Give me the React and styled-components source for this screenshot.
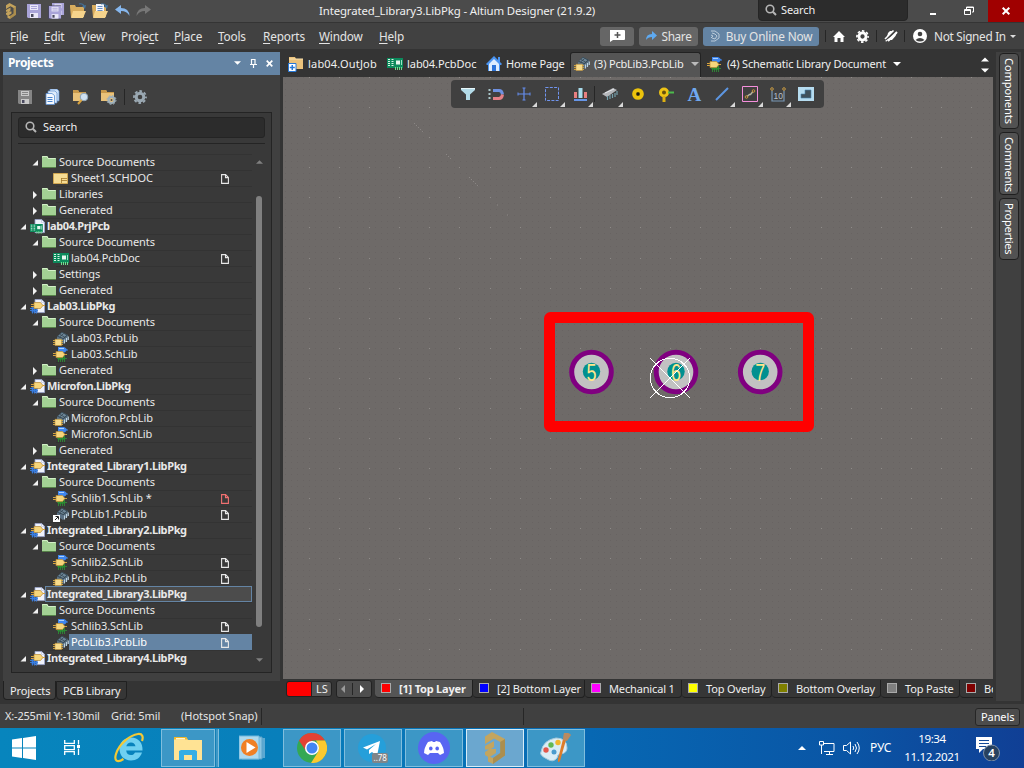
import React from "react";
import styled, { createGlobalStyle } from "styled-components";

const Global = createGlobalStyle`
  * { box-sizing: border-box; }
  body { margin: 0; background: #333; overflow: hidden; }
  svg { display: block; flex: none; }
`;

/* ---------- shared ---------- */
const Screen = styled.div`
  width: 1024px;
  height: 768px;
  display: flex;
  flex-direction: column;
  background: #343434;
  color: #f0f0f0;
  font: 11px/16px "Noto Sans", "Open Sans", sans-serif;
  overflow: hidden;
`;
const Label = styled.span`
  display: block;
  flex: none;
  width: ${(p) => (p.$w ? p.$w + "px" : "auto")};
  letter-spacing: ${(p) => p.$ls ?? -0.1}px;
  font-weight: ${(p) => (p.$bold ? 700 : 400)};
  font-size: ${(p) => p.$size || 11}px;
  white-space: pre;
`;
const Svg = ({ w = 16, h = 16, children, ...rest }) => (
  <svg width={w} height={h} viewBox={`0 0 ${w} ${h}`} {...rest}>{children}</svg>
);

/* ---------- icons ---------- */
const Altium = ({ w = 12, h = 16, c = "#c4a35c" }) => (
  <svg width={w} height={h} viewBox="0 0 12 16">
    <path d="M1 2.200 4.500 0 11 3.500v8.300L5 16l-2.500-1.300V12L5 13l3.600-2.500V5L5.500 3.200 1 6z" fill={c} />
    <path d="M1 7 5.500 4.500v3L4 8.500h2.500v2L3 12.800 1 11.500V10l2-1.200H1z" fill={c} />
    <path d="M8.600 5 11 3.500v8.300L5 16v-3l3.600-2.500z" fill="#7d6430" opacity=".35" />
  </svg>
);
const Floppy = ({ c = "#a9a4d8", d = "#e9e7f7" }) => (
  <g>
    <path d="M0 0h14v14H1l-1-1z" fill={c} />
    <path d="M3 1h8v5H3z" fill={d} />
    <path d="M4 2.500h6M4 4.500h6" stroke={c} />
    <path d="M3 9h8v5H3z" fill={d} />
    <path d="M4 10h2.500v3H4z" fill="#4a4a60" />
  </g>
);
const SaveIcon = ({ grey }) => (
  <Svg w={14} h={14}>{grey ? <Floppy c="#858585" d="#c9c9c9" /> : <Floppy />}</Svg>
);
const SaveAllIcon = () => (
  <Svg w={17} h={16}>
    <g transform="translate(4 0) scale(.86)"><Floppy /></g>
    <path d="M0 2.500h13V16H0z" fill="#47465f" />
    <g transform="translate(1 3) scale(.86 .9)"><Floppy /></g>
  </Svg>
);
const OpenIcon = ({ page }) => (
  <Svg w={17} h={16}>
    <path d="M0 4V2h5l1 2h8v10H1z" fill="#d9ad5e" />
    {page && <path d="M4 1h8v9H4z" fill="#f4f6fb" />}
    {page && <path d="M5.500 3.500h5M5.500 5.500h5M5.500 7.500h5" stroke="#6a8fc4" />}
    <path d="M3 8h13l-3 7H1z" fill="#f6d48c" />
    <path d="M9 1q4-1 5 2" fill="none" stroke="#44739c" strokeWidth="1.200" />
    <path d="m12 3 4-1-1 4z" fill="#44739c" />
  </Svg>
);
const UndoIcon = ({ c = "#86b7ee", flip }) => (
  <Svg w={15} h={12}>
    <g transform={flip ? "translate(15 0) scale(-1 1)" : undefined}>
      <path d="M0 4.500 6 0v3q8 0 8.500 8Q12 6 6 6v3z" fill={c} />
    </g>
  </Svg>
);
const SearchIcon = ({ c = "#b5b5b5" }) => (
  <Svg w={12} h={12}>
    <circle cx="5" cy="5" r="3.800" fill="none" stroke={c} strokeWidth="1.600" />
    <path d="m7.800 7.800 3.200 3.200" stroke={c} strokeWidth="2" />
  </Svg>
);
const DocsIcon = () => (
  <Svg w={15} h={16}>
    <path d="M5 0h7l2 2v10H5z" fill="#cfe2f7" stroke="#5b8fd0" strokeWidth=".7" />
    <path d="M3 2h7l2 2v10H3z" fill="#dfecfa" stroke="#5b8fd0" strokeWidth=".7" />
    <path d="M1 4.500h6l2.500 2v9H1z" fill="#f5f9ff" stroke="#5b8fd0" strokeWidth=".8" />
    <path d="M2.500 8.500h5M2.500 10.500h5M2.500 12.500h5" stroke="#4a86cf" />
  </Svg>
);
const FolderTool = ({ gear }) => (
  <Svg w={17} h={16}>
    <path d="M1 1h5l1 2h7v9H1z" fill="#e9c27a" />
    <path d="M1 1h5l1 2h7v1H1z" fill="#c99a4c" />
    {gear ? (
      <g>
        <circle cx="11.500" cy="11" r="3" fill="#e9c27a" stroke="#9fb0ba" strokeWidth="2.200" />
        <circle cx="11.500" cy="11" r="1" fill="#4a4a4a" />
        <circle cx="11.500" cy="11" r="4.500" fill="none" stroke="#9fb0ba" strokeWidth="1" strokeDasharray="1.800 1.734" />
      </g>
    ) : (
      <g>
        <circle cx="12" cy="8" r="3.800" fill="#cfe0f0" stroke="#8aa0b4" />
        <path d="m9.500 11-3.500 4" stroke="#d9a441" strokeWidth="2" />
      </g>
    )}
  </Svg>
);
const GearIcon = ({ c = "#9aa8b2", s = 14 }) => (
  <svg width={s} height={s} viewBox="0 0 14 14">
    <circle cx="7" cy="7" r="3.800" fill="none" stroke={c} strokeWidth="3" />
    <circle cx="7" cy="7" r="6" fill="none" stroke={c} strokeWidth="1.800" strokeDasharray="2.700 2.012" strokeDashoffset="1.350" />
  </svg>
);
const FolderIcon = () => (
  <Svg w={14} h={12}>
    <path d="M0 0h5.500l1 2H14v9H0z" fill="#a3d194" />
    <path d="M.5 1.500v-1H5l1 2h7.500" fill="none" stroke="#d3efc8" />
    <path d="M0 11.500h14" stroke="#558048" />
  </Svg>
);
const BoardArt = () => (
  <g>
    <path d="M0 0h16v10H0z" fill="#0c8a5c" />
    <path d="M1 1.500h2M1 3.500h2M1 5.500h2M1 7.500h2M4.500 1.500h2M4.500 3.500h2M4.500 5.500h2M4.500 7.500h2" stroke="#d8f4e6" />
    <path d="M9 2.500h4v4H9z" fill="#e6f6ee" />
    <path d="M14.500 2v5" stroke="#9fe0c4" />
    <path d="M8.500 9v3M10.500 9v3M12.500 9v3M14.500 9v3" stroke="#6fe08f" />
  </g>
);
const PcbIcon = () => <Svg w={16} h={12}><BoardArt /></Svg>;
const SheetIcon = () => (
  <Svg w={15} h={11}>
    <path d="M.5.500h14v10H.5z" fill="#f5dc94" stroke="#d0a650" />
    <path d="M8 5.500h6M8 7.500h6M8.500 5v5" stroke="#a37a2c" strokeWidth=".8" />
  </Svg>
);
const PageArt = () => (
  <g><path d="M5 .4h6.500l3 3v10.200H5z" fill="#eef2fb" stroke="#9aa6cf" strokeWidth=".8" /><path d="m11.500.4 3 3h-3z" fill="#fff" stroke="#9aa6cf" strokeWidth=".5" /></g>
);
const PrjIcon = () => <Svg w={16} h={15}><PageArt /><g transform="translate(0 5) scale(.8)"><BoardArt /></g></Svg>;
const GateArt = () => (
  <g><path d="M0 2.500h4M0 4.500h4M10 3.500h4" stroke="#d9a43c" /><path d="M3 .5h6.500L12 3.500l-2.500 3H3z" fill="#f6d67c" stroke="#b98a35" strokeWidth=".7" /></g>
);
const PkgIcon = () => (
  <Svg w={16} h={15}>
    <PageArt />
    <path d="M1.500 8h6v5.500h-6z" fill="#2a62bd" />
    <path d="M0 9.500h8M0 11.500h8M2.500 14.500v-6M4.500 14.500v-6M6.500 14.500v-6" stroke="#3b80e0" strokeWidth=".9" />
    <g transform="translate(1 3)"><GateArt /></g>
  </Svg>
);
const SchLibIcon = () => (
  <Svg w={16} h={15}>
    <path d="M5 0h6q2 .5 3 2.500-1 2.500-3 3H5z" fill="#3f86ee" />
    <path d="M6 1.500h5" stroke="#a9d0ff" />
    <path d="M13 3h2" stroke="#3f86ee" />
    <path d="M5 9h7v4H5z" fill="#1f7a2a" />
    <path d="M5.500 9v6M7.500 9v6M9.500 9v6M11.500 9v6M4 11.500h10" stroke="#2f8a35" strokeWidth=".9" />
    <g transform="translate(0 4)"><GateArt /></g>
  </Svg>
);
const PcbLibIcon = ({ linked }) => (
  <Svg w={16} h={14}>
    <path d="M4 4.500 9 0l6 3v5l-5 4-6-4z" fill="#5a7083" />
    <path d="M4 4.500 9 0l6 3-4.500 4z" fill="#33444f" />
    <path d="M5 4 9 .8l4.500 2.400-3.300 2.800z" fill="#6e8799" />
    <path d="m7 2.500 4.500 2.500M6.500 5l4-3.300" stroke="#33444f" strokeWidth=".8" />
    <path d="M11.500 7.500v4M13.500 6v4M15.300 4.500V8" stroke="#bcd0dc" strokeWidth="1.100" />
    {linked ? (
      <g><path d="M0 7h7v7H0z" fill="#fff" /><path d="m2 12 3-3M2.500 8.500h3v3" stroke="#222" fill="none" /></g>
    ) : (
      <g><path d="M0 8.500h10M0 10.500h10M0 12.500h10" stroke="#cda13d" /><path d="M2 7.300h6.500v6.200H2z" fill="#f8dc8c" stroke="#c2953c" strokeWidth=".6" /></g>
    )}
  </Svg>
);
const OutJobIcon = () => (
  <Svg w={16} h={15}>
    <path d="M1 0h6l1 2h7v10H1z" fill="#eac27c" /><path d="M1 2h14" stroke="#fae2ae" />
    <path d="M.5 6.500h7.500v8H.5z" fill="#fff" stroke="#2678d8" />
    <path d="M4.250 8v5M1.800 10.500h5" stroke="#2678d8" strokeWidth="1.500" />
  </Svg>
);
const HomeIcon = () => (
  <Svg w={16} h={16}>
    <path d="M12 1h2v5h-2z" fill="#4a94f2" />
    <path d="m8 0 8 8-1 1h-1v6H2V9H1L0 8z" fill="#4a94f2" />
    <path d="m8 3 5 5v7H3V8z" fill="#dcecff" /><path d="M6 9h4v6H6z" fill="#2b72d8" />
  </Svg>
);
const FileMark = ({ c = "#eee" }) => (
  <Svg w={8} h={10}><path d="M.6.600h4L7.400 3.500v5.900H.6zM4.500.600v3h3" fill="none" stroke={c} strokeWidth="1.100" /></Svg>
);
const DownTri = ({ c = "#fff", w = 8, h = 4 }) => (
  <svg width={w} height={h} viewBox="0 0 8 4"><path d="M0 0h8L4 4z" fill={c} /></svg>
);

/* ---------- title bar ---------- */
const TitleBar = styled.header`
  height: 23px;
  flex: none;
  display: flex;
  align-items: center;
  background: #4b4b4b;
  border-bottom: 1px solid #343434;
`;
const QuickTools = styled.div`
  width: 319px;
  padding-left: 5px;
  display: flex;
  align-items: center;
`;
const Slot = styled.span`
  width: ${(p) => p.$w}px;
  flex: none;
  display: flex;
  align-items: center;
  justify-content: ${(p) => p.$j || "flex-start"};
`;
const TitleSearch = styled.div`
  width: 150px;
  height: 22px;
  margin-top: -2px;
  padding: 0 0 0 6px;
  display: flex;
  align-items: center;
  gap: 4px;
  background: #2c2c2c;
  border: 1px solid #252525;
  border-radius: 0 0 4px 4px;
`;
const WinButton = styled.span`
  width: ${(p) => p.$w}px;
  height: 22px;
  padding-right: ${(p) => p.$pr || 0}px;
  display: flex;
  align-items: center;
  justify-content: center;
  background: ${(p) => (p.$red ? "#a00000" : "transparent")};
`;

/* ---------- menu ---------- */
const MenuBar = styled.nav`
  height: 26px;
  flex: none;
  display: flex;
  align-items: center;
  padding-left: 10px;
  background: #414141;
  color: #e4e4e4;
`;
const MenuItem = styled.span`
  width: ${(p) => p.$w}px;
  flex: none;
  margin-top: -1px;
  font-size: 11.8px;
  letter-spacing: -0.18px;
  u { text-underline-offset: 2px; }
`;
const MenuButton = styled.span`
  width: ${(p) => p.$w}px;
  height: 19px;
  margin-right: ${(p) => p.$mr}px;
  padding-bottom: 1px;
  display: flex;
  flex: none;
  align-items: center;
  justify-content: center;
  gap: 5px;
  border-radius: 3px;
  background: ${(p) => (p.$blue ? "#6484a4" : "#666")};
`;
const Divider = styled.i`
  width: 1px;
  height: ${(p) => p.$h || 12}px;
  flex: none;
  background: #262626;
`;

/* ---------- main areas ---------- */
const Main = styled.main`height: 655px; flex: none; display: flex;`;
const LeftDock = styled.aside`
  width: 283px;
  flex: none;
  padding: 3px 3px 0 3px;
  display: flex;
  flex-direction: column;
`;
const PanelHeader = styled.div`
  height: 23px;
  flex: none;
  padding: 0 7px 1px 5px;
  display: flex;
  align-items: center;
  background: #6484a4;
  color: #fff;
`;
const HeaderTools = styled.div`margin-left: auto; display: flex; align-items: center; gap: 9px;`;
const Panel = styled.section`
  height: 606px;
  flex: none;
  padding: 13px 8px 8px;
  background: #404040;
`;
const PanelTools = styled.div`height: 18px; display: flex; align-items: center; padding-left: 7px;`;
const TreeFrame = styled.div`
  height: 561px;
  margin-top: 6px;
  padding: 4px 6px 0;
  background: #393939;
  border: 1px solid #242424;
`;
const TreeSearch = styled.div`
  height: 21px;
  padding: 0 0 1px 6px;
  display: flex;
  align-items: center;
  gap: 6px;
  background: #2c2c2c;
  border: 1px solid #242424;
  border-radius: 3px;
`;
const TreeRule = styled.div`height: 1px; margin-top: 5px; background: #242424;`;
const TreeArea = styled.div`display: flex; margin-top: 10px;`;
const Tree = styled.div`width: 234px; flex: none;`;
const Row = styled.div`
  height: 16px;
  display: flex;
  align-items: center;
  padding-left: ${(p) => [2, 14, 25][p.$level]}px;
`;
const RowIcon = styled.span`
  width: ${(p) => [16, 14, 16][p.$level]}px;
  height: 16px;
  flex: none;
  display: flex;
  align-items: center;
  margin-left: ${(p) => (p.$level === 2 ? 10 : 0)}px;
  padding-top: ${(p) => (p.$level === 1 ? 0 : 1)}px;
`;
const Twisty = styled.span`
  width: ${(p) => (p.$level === 2 ? 0 : 10)}px;
  flex: none;
  padding-top: 2px;
`;
const RowBody = styled.span`
  flex: 1;
  height: 16px;
  display: flex;
  align-items: center;
  justify-content: space-between;
  padding: 0 23px 0 ${(p) => (p.$focused ? 1 : p.$level === 1 ? 3 : 2)}px;
  margin-left: ${(p) => (p.$level === 0 ? -1 : 0)}px;
  background: ${(p) => (p.$selected ? "#6484a4" : p.$focused ? "#4c4c4c" : "none")};
  border: ${(p) => (p.$focused ? "1px solid #6484a4" : "0")};
  border-top: 1px solid ${(p) => (p.$selected || p.$focused ? "#6484a4" : "#333")};
  color: ${(p) => (p.$selected ? "#fff" : "#e8e8e8")};
`;
const RowText = styled(Label)`margin-top: ${(p) => (p.$focused ? -1 : -2)}px;`;
const Scroll = styled.div`
  width: 6px;
  margin: 6px 0 0 4px;
  display: flex;
  flex-direction: column;
  align-items: center;
`;
const Thumb = styled.div`width: 6px; height: 431px; margin: 32px 0 31px; background: #808080; border-radius: 3px;`;
const PanelTabs = styled.div`display: flex; height: 21px;`;
const PanelTab = styled.span`
  width: ${(p) => p.$w}px;
  height: 19px;
  padding: ${(p) => (p.$active ? 2 : 1)}px 0 0 6px;
  border: 1px solid #202020;
  border-top: ${(p) => (p.$active ? "0" : "1px solid #202020")};
  border-radius: 0 0 4px 4px;
  background: ${(p) => (p.$active ? "#404040" : "#363636")};
`;

/* ---------- center ---------- */
const Center = styled.section`width: 710px; flex: none; display: flex; flex-direction: column; overflow: hidden;`;
const DocTabs = styled.div`height: 28px; flex: none; display: flex; align-items: center; padding: 3px 0 0 5px;`;
const DocTab = styled.span`
  width: ${(p) => p.$w}px;
  height: 25px;
  flex: none;
  display: flex;
  align-items: center;
  gap: 4px;
  padding: 0 0 1px ${(p) => (p.$active ? 3 : 0)}px;
  ${(p) => p.$active && "background:#555; border:1px solid #222; border-bottom:0; border-radius:3px 3px 0 0; margin-right:6px; padding-bottom:2px;"}
`;
const Canvas = styled.div`height: 602px; flex: none; position: relative; background: #6e6a68;`;
const ToolStrip = styled.div`
  position: absolute;
  left: 168px;
  top: 3px;
  width: 373px;
  height: 28px;
  padding-left: 3px;
  display: flex;
  align-items: center;
  background: #404040;
  border-radius: 4px;
`;
const Tool = styled.span`
  width: ${(p) => p.$w || 28}px;
  height: 28px;
  flex: none;
  display: flex;
  align-items: center;
  justify-content: center;
  position: relative;
  ${(p) => p.$menu && "&::after{content:'';position:absolute;right:1px;bottom:1px;border-style:solid;border-width:0 0 5px 5px;border-color:transparent transparent #d8d8d8 transparent;}"}
`;
const LayerBar = styled.div`height: 25px; flex: none; display: flex; padding: 1px 0 0 3px; overflow: hidden;`;
const LayerSet = styled.span`
  width: 46px;
  height: 16px;
  flex: none;
  margin: 1px 4px 0 0;
  display: flex;
  border: 1px solid #222;
  border-radius: 3px;
  background: linear-gradient(90deg, #f00 24px, #222 24px, #222 25px, #555 25px);
  padding-left: 29px;
  line-height: 14px;
`;
const LayerArrows = styled.span`
  width: 36px;
  height: 18px;
  flex: none;
  margin-right: 3px;
  padding-right: 3px;
  display: flex;
  align-items: center;
  justify-content: space-around;
  background: #4e4e4e;
  border: 1px solid #222;
  border-radius: 3px;
`;
const LayerTab = styled.span`
  width: ${(p) => p.$w}px;
  height: 18px;
  flex: none;
  display: flex;
  align-items: center;
  gap: 8px;
  padding-left: 6px;
  background: ${(p) => (p.$active ? "#555" : "#363636")};
  border: solid #202020;
  border-width: 0 1px 1px 0;
  border-radius: 0 0 4px 4px;
`;
const Swatch = styled.i`width: 10px; height: 10px; flex: none; margin-top: -2px; background: ${(p) => p.$c}; border: 1px solid #aaa;`;

/* ---------- right dock ---------- */
const RightDock = styled.aside`width: 31px; padding: 3px;`;
const RightRail = styled.div`
  height: 649px;
  padding: 1px 2px 0 3px;
  display: flex;
  flex-direction: column;
  gap: 3px;
  background: #404040;
`;
const SideTab = styled.span`
  height: ${(p) => p.$h}px;
  width: 20px;
  flex: none;
  padding: 4px 1px 0;
  writing-mode: vertical-rl;
  letter-spacing: ${(p) => p.$ls ?? -0.2}px;
  background: #525252;
  border: 1px solid #1f1f1f;
  border-radius: 4px;
  color: #fff;
`;

/* ---------- bottom ---------- */
const StatusBar = styled.footer`
  height: 24px;
  flex: none;
  display: flex;
  align-items: center;
  padding: 0 4px 0 5px;
  background: #404040;
  color: #e6e6e6;
`;
const PanelsButton = styled.span`
  width: 45px;
  height: 18px;
  margin: 1px 0 0 auto;
  padding-left: 5px;
  background: #4c4c4c;
  border: 1px solid #262626;
  border-radius: 3px;
  line-height: 16px;
  letter-spacing: -0.1px;
  color: #fff;
`;
const TaskBar = styled.footer`
  height: 40px;
  flex: none;
  display: flex;
  align-items: center;
  background: linear-gradient(90deg, #0785bd 0, #087fbb 280px, #0768b3 590px, #0a55a5 850px, #103f95 1024px);
  color: #fff;
`;
const TaskButton = styled.span`
  width: ${(p) => p.$w || 58}px;
  height: 38px;
  margin-right: ${(p) => (p.$mr ?? 3)}px;
  flex: none;
  display: flex;
  align-items: center;
  justify-content: center;
  background: ${(p) => (p.$active ? "#6ba7cf" : p.$open ? "#3c97c6" : "none")};
  border: 1px solid ${(p) => (p.$active ? "#d8edf8" : p.$open ? "#80bedd" : "transparent")};
  ${(p) => p.$stack && "box-shadow: 1px 0 0 #147fb5, 3px 0 0 #3c97c6, 4px 0 0 #80bedd;"}
`;
const Tray = styled.div`margin-left: auto; width: 226px; display: flex; align-items: center;`;
const Clock = styled.div`
  width: 60px;
  margin: -1px 13px 0 -2px;
  text-align: center;
  line-height: 17.5px;
  font-size: 11.6px;
  letter-spacing: -0.4px;
  white-space: nowrap;
`;

/* ---------- data ---------- */
const src = () => [1, "Source Documents", "folder", true];
const rows = [
  src(),
  [2, "Sheet1.SCHDOC", "sheet", null, "w"],
  [1, "Libraries", "folder", false],
  [1, "Generated", "folder", false],
  [0, "lab04.PrjPcb", "prj", true],
  src(),
  [2, "lab04.PcbDoc", "pcb", null, "w"],
  [1, "Settings", "folder", false],
  [1, "Generated", "folder", false],
  [0, "Lab03.LibPkg", "pkg", true],
  src(),
  [2, "Lab03.PcbLib", "pcblib"],
  [2, "Lab03.SchLib", "schlib"],
  [1, "Generated", "folder", false],
  [0, "Microfon.LibPkg", "pkg", true],
  src(),
  [2, "Microfon.PcbLib", "pcblib"],
  [2, "Microfon.SchLib", "schlib"],
  [1, "Generated", "folder", false],
  [0, "Integrated_Library1.LibPkg", "pkg", true],
  src(),
  [2, "Schlib1.SchLib *", "schlib", null, "r"],
  [2, "PcbLib1.PcbLib", "linked", null, "w"],
  [0, "Integrated_Library2.LibPkg", "pkg", true],
  src(),
  [2, "Schlib2.SchLib", "schlib", null, "w"],
  [2, "PcbLib2.PcbLib", "pcblib", null, "w"],
  [0, "Integrated_Library3.LibPkg", "pkg", true, null, "focus"],
  src(),
  [2, "Schlib3.SchLib", "schlib", null, "w"],
  [2, "PcbLib3.PcbLib", "pcblib", null, "w", "select"],
  [0, "Integrated_Library4.LibPkg", "pkg", true],
];
const rowIcons = {
  folder: <FolderIcon />, sheet: <SheetIcon />, prj: <PrjIcon />, pcb: <PcbIcon />,
  pkg: <PkgIcon />, pcblib: <PcbLibIcon />, schlib: <SchLibIcon />, linked: <PcbLibIcon linked />,
};
const menu = [["", "F", "ile", 34], ["", "E", "dit", 36], ["", "V", "iew", 41], ["Proje", "c", "t", 53],
  ["", "P", "lace", 44], ["", "T", "ools", 45], ["", "R", "eports", 56], ["", "W", "indow", 60], ["", "H", "elp", 221]];
const layers = [["[1] Top Layer", "#f00", 98, true], ["[2] Bottom Layer", "#00f", 112], ["Mechanical 1", "#f0f", 97],
  ["Top Overlay", "#ff0", 90], ["Bottom Overlay", "#808000", 109], ["Top Paste", "#808080", 79], ["Bottom Paste", "#800000", 80]];

/* dots of the placement grid, as one path per density */
const dots = (step, x0, y0) => {
  let d = "";
  for (let i = 0; x0 + i * step < 710; i++)
    for (let j = 0; y0 + j * step < 602; j++)
      d += `M${Math.round(x0 + i * step)} ${Math.round(y0 + j * step)}h1v1h-1z`;
  return d;
};
const majorDots = dots(30.09, 26, 0);
const minorDots = dots(6.018, 2, 0);

const Board = () => (
  <svg width="710" height="602" viewBox="0 0 710 602">
    <path d={minorDots} fill="#666260" opacity=".8" shapeRendering="crispEdges" />
    <path d={majorDots} fill="#8e8b88" shapeRendering="crispEdges" />
    <path d="m131 46 10 10M163 77l6 6M186 100l10 10M214 128h1M224 138h1" stroke="#8b8785" strokeDasharray="1.400 1.400" />
    <rect x="266.500" y="240.500" width="259" height="109" rx="1" fill="none" stroke="#f00" strokeWidth="11" strokeLinejoin="round" />
    {[["5", 308.500], ["6", 393], ["7", 477.200]].map(([n, x]) => (
      <g key={n}>
        <circle cx={x} cy="295" r="19.800" fill="#c2c2c2" stroke="#800080" strokeWidth="5" />
        <circle cx={x} cy="294.500" r="8.700" fill="#009090" />
        <text x={x - 5} y="304" fontFamily="Liberation Sans" fontSize="24" fill="#ffe68c" textLength="10" lengthAdjust="spacingAndGlyphs">{n}</text>
      </g>
    ))}
    <g fill="none" stroke="#fff" shapeRendering="crispEdges">
      <circle cx="387" cy="301" r="19.700" />
      <path d="m367 281 40 40M407 281l-40 40" />
    </g>
  </svg>
);

const tools = [
  [<Svg w={14} h={12} key="f"><path d="M0 0h14v2L9 6.500V12H5V6.500L0 2z" fill="#b3dbe8" /><path d="M0 .5h14" stroke="#e6f7fb" /></Svg>],
  [<Svg w={16} h={13} key="m"><path d="M1.500 1v11" stroke="#a9c6c9" strokeWidth="2" strokeDasharray="2 2" /><path d="M5 2.500h6q3 0 3.500 4" fill="none" stroke="#6f91e2" strokeWidth="3" /><path d="M5 10.500h6q3 0 3.500-4" fill="none" stroke="#e58087" strokeWidth="3" /></Svg>],
  [<Svg w={14} h={14} key="c"><path d="M7 1v12M1 7h12" stroke="#658dee" strokeWidth="1.200" /><path d="M5.500 1h3M5.500 13h3M1 5.500v3M13 5.500v3" stroke="#658dee" /></Svg>, 1],
  [<Svg w={14} h={14} key="s"><path d="M.5.500h13v13H.5z" fill="none" stroke="#7094ee" strokeDasharray="3 1.300" /></Svg>, 1],
  [<Svg w={13} h={13} key="a"><path d="M0 4h3v6H0zM10 4h3v6h-3z" fill="#e77f80" /><path d="M4.500 0h4v10h-4z" fill="#a8dced" /><path d="M0 11h13v2H0z" fill="#6796e8" /></Svg>, 1, 28],
  [<Svg w={16} h={12} key="k"><path d="m0 6 11-6 4 2L5 9z" fill="#b5b7bb" /><path d="m3 5 9-4" stroke="#e5e7ec" /><path d="M5.500 8v4M8 7v4M10.500 6v4M13 5v4M15 3v4" stroke="#76a0ac" strokeWidth="1.200" /></Svg>, 1, 29],
  [<Svg w={13} h={12} key="p"><circle cx="6" cy="6" r="3.900" fill="#3b3510" stroke="#ecc30c" strokeWidth="3.900" /><circle cx="6" cy="6" r="1" fill="#111" /></Svg>],
  [<Svg w={16} h={15} key="v"><circle cx="6" cy="5.500" r="3.500" fill="#665010" stroke="#edc315" strokeWidth="3" /><path d="M6 9v6" stroke="#ddb012" strokeWidth="3" /><path d="M10 5.500h6" stroke="#4cba4c" strokeWidth="2" /></Svg>, 0, 27],
  [<svg key="t" width="18" height="24"><text x="2.500" y="19" fontFamily="Liberation Serif" fontWeight="700" fontSize="19" fill="#6fa8ee">A</text></svg>, 0, 29],
  [<Svg w={14} h={14} key="l"><path d="M1 13 13 1" stroke="#5d96e2" strokeWidth="2" /></Svg>, 1, 28],
  [<Svg w={16} h={16} key="r"><path d="M.5.500h15v15H.5z" fill="none" stroke="#f58fdc" /><path d="m5 10.500 2.500-2h1l2.500-3" fill="none" stroke="#b8b6a0" strokeWidth="1.400" /><circle cx="4.500" cy="11" r="1.300" fill="none" stroke="#c7943b" /><circle cx="11.500" cy="5" r="1.300" fill="none" stroke="#c7943b" /></Svg>, 1],
  [<Svg w={16} h={15} key="d"><path d="M2 3.500V14h12V3.500" fill="none" stroke="#7898b6" strokeWidth="1.200" /><circle cx="2" cy="2" r="1.300" fill="none" stroke="#c79a43" /><circle cx="14" cy="2" r="1.300" fill="none" stroke="#c79a43" /><text x="3.500" y="11.500" fontFamily="Liberation Sans" fontSize="8.500" fill="#b7c1cc">10</text></Svg>, 1],
  [<Svg w={16} h={14} key="o"><path d="M0 0h16v14H0z" fill="#b6dcf0" /><path d="M3 7h4V3h6v8H3z" fill="#40515c" stroke="#4a88ae" strokeWidth=".6" /></Svg>],
];

export default function App() {
  return (
    <Screen>
      <Global />
      <TitleBar>
        <QuickTools>
          <Slot $w={22}><Altium /></Slot>
          <Slot $w={21}><SaveIcon /></Slot>
          <Slot $w={22}><SaveAllIcon /></Slot>
          <Slot $w={22}><OpenIcon /></Slot>
          <Slot $w={23}><OpenIcon page /></Slot>
          <Slot $w={21}><UndoIcon /></Slot>
          <Slot $w={20}><UndoIcon c="#777" flip /></Slot>
        </QuickTools>
        <Label $w={439} $size={11.4} $ls={-0.12}>Integrated_Library3.LibPkg - Altium Designer (21.9.2)</Label>
        <TitleSearch><SearchIcon /><Label>Search</Label></TitleSearch>
        <WinButton $w={49}><Svg w={6} h={10}><path d="M0 7h6v2H0z" fill="#fff" /></Svg></WinButton>
        <WinButton $w={31} $pr={7}><Svg w={10} h={10}><path d="M2.500 3V1h7v5H8M.5 3.500h6v5h-6zM2 1.500h8M0 4.500h7" fill="none" stroke="#fff" /></Svg></WinButton>
        <WinButton $w={36} $red><Svg w={8} h={8}><path d="m.7.700 6.600 6.600M7.300.700.700 7.300" stroke="#fff" strokeWidth="2" /></Svg></WinButton>
      </TitleBar>

      <MenuBar>
        {menu.map(([a, b, c, w]) => <MenuItem key={a + b + c} $w={w}>{a}<u>{b}</u>{c}</MenuItem>)}
        <MenuButton $w={34} $mr={5}>
          <Svg w={16} h={13}><path d="M1 1h14q1 0 1 1v8q0 1-1 1H4l-3 2V2z" fill="#fff" /><path d="M8.500 3v6M5.500 6h6" stroke="#555" strokeWidth="1.500" /></Svg>
        </MenuButton>
        <MenuButton $w={59} $mr={5}>
          <Svg w={11} h={9}><path d="M0 9q0-6 6-6V0l5 4.500L6 9V6Q2 6 0 9z" fill="#5eaaf2" /></Svg>
          <Label $size={11.8} $ls={-0.35}>Share</Label>
        </MenuButton>
        <MenuButton $w={116} $mr={6} $blue>
          <Svg w={11} h={12}><path d="M1 1h4l4 3v4l-4 3H1M2 3l3 1 2 2-2 3-3-1M1 5l2 1-2 2" fill="none" stroke="#b9c9d8" /></Svg>
          <Label $size={11.8} $ls={-0.15}>Buy Online Now</Label>
        </MenuButton>
        <Divider />
        <Slot $w={26} $j="center"><Svg w={12} h={11}><path d="m6 0 6 6h-1.500v5h-3V7h-3v4h-3V6H0z" fill="#fff" /></Svg></Slot>
        <Slot $w={20} $j="center"><GearIcon c="#fff" s={13} /></Slot>
        <Slot $w={5} $j="flex-end"><Divider /></Slot>
        <Slot $w={27} $j="center"><Svg w={14} h={12}><path d="M6 1h2.500L3 7l1-4zM13 2.500 11.500 6 8 10H4l-1.500 1.500L1 11z" fill="#fff" /><path d="m1 9 8.500-8.500" stroke="#fff" strokeWidth="1.600" /><path d="m4 11 9-9" stroke="#fff" strokeWidth="2" /></Svg></Slot>
        <Divider />
        <Slot $w={29} $j="center"><Svg w={14} h={14}><circle cx="7" cy="7" r="7" fill="#fff" /><circle cx="7" cy="5" r="2.300" fill="#414141" /><path d="M2.500 11q4.500-4 9 0-4.500 3-9 0z" fill="#414141" /></Svg></Slot>
        <Label $size={11.8} $ls={-0.3} $w={76}>Not Signed In</Label>
        <DownTri c="#ddd" w={6} h={3} />
      </MenuBar>

      <Main>
        <LeftDock>
          <PanelHeader>
            <Label $bold $size={12} $ls={-0.35}>Projects</Label>
            <HeaderTools>
              <DownTri w={7} h={4} />
              <Svg w={7} h={9}><path d="M1.500 0v5M5 0v5M1.500.500H5M0 5.500h7M3.500 5v4" stroke="#fff" fill="none" strokeWidth="1.200" /></Svg>
              <Svg w={7} h={7}><path d="m.7.700 5.600 5.600M6.300.700.700 6.300" stroke="#fff" strokeWidth="1.700" /></Svg>
            </HeaderTools>
          </PanelHeader>
          <Panel>
            <PanelTools>
              <Slot $w={27}><SaveIcon grey /></Slot>
              <Slot $w={27}><DocsIcon /></Slot>
              <Slot $w={28}><FolderTool /></Slot>
              <Slot $w={24}><FolderTool gear /></Slot>
              <Slot $w={9}><Divider $h={16} /></Slot>
              <GearIcon />
            </PanelTools>
            <TreeFrame>
              <TreeSearch><SearchIcon /><Label>Search</Label></TreeSearch>
              <TreeRule />
              <TreeArea>
                <Tree>
                  {rows.map(([level, text, icon, open, mark, state], i) => (
                    <Row key={i} $level={level}>
                      <Twisty $level={level}>
                        {open === true && <Svg w={6} h={6}><path d="M6 0v5.500H.5z" fill="#f2f2f2" /></Svg>}
                        {open === false && <Svg w={6} h={8}><path d="m1 0 4 4-4 4z" fill="#f2f2f2" /></Svg>}
                      </Twisty>
                      <RowIcon $level={level}>{rowIcons[icon]}</RowIcon>
                      <RowBody $level={level} $selected={state === "select"} $focused={state === "focus"}>
                        <RowText $bold={level === 0} $focused={state === "focus"} $ls={level === 0 ? -0.36 : -0.1}>{text}</RowText>
                        {mark && <FileMark c={mark === "r" ? "#f07070" : "#e8e8e8"} />}
                      </RowBody>
                    </Row>
                  ))}
                </Tree>
                <Scroll>
                  <svg width="7" height="4" viewBox="0 0 8 4"><path d="M0 4h8L4 0z" fill="#808080" /></svg>
                  <Thumb />
                  <DownTri c="#808080" w={7} h={4} />
                </Scroll>
              </TreeArea>
            </TreeFrame>
          </Panel>
          <PanelTabs>
            <PanelTab $w={53} $active><Label>Projects</Label></PanelTab>
            <PanelTab $w={71}><Label $ls={-0.2}>PCB Library</Label></PanelTab>
          </PanelTabs>
        </LeftDock>

        <Center>
          <DocTabs>
            <DocTab $w={99}><OutJobIcon /><Label $ls={0.2}>lab04.OutJob</Label></DocTab>
            <DocTab $w={99}><PcbIcon /><Label $ls={-0.05}>lab04.PcbDoc</Label></DocTab>
            <DocTab $w={84}><HomeIcon /><Label $ls={-0.15}>Home Page</Label></DocTab>
            <DocTab $w={131} $active><PcbLibIcon /><Label $w={93} $ls={-0.2}>(3) PcbLib3.PcbLib</Label><DownTri c="#bbb" w={8} /></DocTab>
            <DocTab $w={274}><SchLibIcon /><Label $w={162} $ls={-0.18}>(4) Schematic Library Document</Label><DownTri /></DocTab>
            <Svg w={8} h={16}><path d="M0 4.500h8L4 .5zM0 11.500h8l-4 4z" fill="#fff" /></Svg>
          </DocTabs>
          <Canvas>
            <Board />
            <ToolStrip>
              {tools.map(([icon, more, w], i) => (
                <React.Fragment key={i}>
                  {i === 5 && <Divider $h={16} />}
                  <Tool $menu={more} $w={w}>{icon}</Tool>
                </React.Fragment>
              ))}
            </ToolStrip>
          </Canvas>
          <LayerBar>
            <LayerSet>LS</LayerSet>
            <LayerArrows>
              <Svg w={4} h={8}><path d="M4 0v8L0 4z" fill="#999" /></Svg><Divider /><Svg w={4} h={8}><path d="M0 0v8l4-4z" fill="#fff" /></Svg>
            </LayerArrows>
            {layers.map(([name, c, w, active]) => (
              <LayerTab key={name} $w={w} $active={active}><Swatch $c={c} /><Label $bold={active} $ls={active ? -0.2 : -0.15}>{name}</Label></LayerTab>
            ))}
          </LayerBar>
        </Center>

        <RightDock>
          <RightRail>
            <SideTab $h={76} $ls={-0.05}>Components</SideTab>
            <SideTab $h={63}>Comments</SideTab>
            <SideTab $h={62}>Properties</SideTab>
          </RightRail>
        </RightDock>
      </Main>

      <StatusBar>
        <Label $w={106} $ls={-0.18}>X:-255mil Y:-130mil</Label>
        <Label $w={70}>Grid: 5mil</Label>
        <Label $w={80} $ls={0}>(Hotspot Snap)</Label>
        <Divider $h={17} />
        <Slot $w={262} $j="flex-end"><Divider $h={17} /></Slot>
        <PanelsButton>Panels</PanelsButton>
      </StatusBar>

      <TaskBar>
        <TaskButton $w={48} $mr={0}>
          <Svg w={24} h={24}><path d="m0 3.500 10-1.400v9.400H0zM11 2l13-2v11.500H11zM0 12.500h10v9.400L0 20.500zM11 12.500h13V24l-13-2z" fill="#fff" /></Svg>
        </TaskButton>
        <TaskButton $w={48} $mr={4}>
          <Svg w={16} h={16}><path d="M.7 0v3.300h9.600V0M.7 15v-3.300h9.600V15M.7 5.700h9.600v4H.7zM14.500 0v4.500M14.500 8.500V15" fill="none" stroke="#fff" strokeWidth="1.300" /><path d="M13 5h3v3h-3z" fill="#fff" /></Svg>
        </TaskButton>
        <TaskButton $w={58} $mr={3}>
          <Svg w={30} h={32}>
            <path d="M17 5.500c-7 0-11.500 5-11.500 11.500S10 28.500 17 28.500c5.500 0 9.500-3 11-8h-7c-.8 1.700-2.200 2.600-4 2.600-2.700 0-4.600-1.700-4.800-4.600H28.500C29 11 24.500 5.500 17 5.500zM12.300 14.300c.5-2.500 2.300-3.800 4.700-3.800s4.100 1.300 4.500 3.800z" fill="#6fd0f1" />
            <path d="M28 9c1.500-4 .5-7.500-4-7C16 3 5 12 2 22c-2 6.500 1 9.500 7.500 5" fill="none" stroke="#f3c936" strokeWidth="2.200" />
          </Svg>
        </TaskButton>
        <TaskButton $w={54} $mr={8} $open $stack>
          <Svg w={28} h={25}><path d="M0 1h12l2 3h14v20H0z" fill="#ffe394" /><path d="M0 1h12l2 2.500H0z" fill="#efb92c" /><path d="M2 2h9v1.500H2z" fill="#fff3cf" /><path d="M5 24v-9l2-1h14l2 1v9h-5v-5h-8v5z" fill="#35aee5" /></Svg>
        </TaskButton>
        <TaskButton $w={57} $mr={3}>
          <Svg w={26} h={26}><path d="M6 3h20v20H6z" fill="#5ca9d2" /><path d="M3 2h20v22H3z" fill="#8cc5e2" stroke="#58a2ca" /><path d="M0 1h20v23H0z" fill="#aed9ee" stroke="#73b8dc" /><circle cx="10.500" cy="12.500" r="8.500" fill="#f08025" /><path d="m7.500 7 9 5.500-9 5.500z" fill="#fff" /></Svg>
        </TaskButton>
        <TaskButton $open>
          <Svg w={30} h={30}><circle cx="15" cy="15" r="15" fill="#34a853" /><path d="M2 7.500A15 15 0 0 1 28 7.500H15L9 18z" fill="#e34133" /><path d="M28 7.500A15 15 0 0 1 14 30l7-11q2-6-2-11.500z" fill="#fbc92f" /><circle cx="15" cy="15" r="7" fill="#fff" /><circle cx="15" cy="15" r="5.500" fill="#4285f4" /></Svg>
        </TaskButton>
        <TaskButton $open>
          <Svg w={30} h={30}><circle cx="14" cy="15" r="14" fill="#259fda" /><path d="m5 14.500 17-6.500-3 15-5-4-3 2v-4l7-6-9 5.500z" fill="#fff" /><rect x="14" y="20" width="16" height="10" rx="2" fill="#7f8589" /><text x="15.500" y="28" fontFamily="Noto Sans" fontSize="8" fill="#fff">..78</text></Svg>
        </TaskButton>
        <TaskButton $open>
          <Svg w={32} h={32}><circle cx="16" cy="16" r="16" fill="#5865f2" /><path d="m10 10 4-1 1 1h2l1-1 4 1q4 6 4 11l-4 2-2-2h-8l-2 2-4-2q0-5 4-11z" fill="#fff" /><ellipse cx="12.800" cy="16.500" rx="1.800" ry="2" fill="#5865f2" /><ellipse cx="19.200" cy="16.500" rx="1.800" ry="2" fill="#5865f2" /></Svg>
        </TaskButton>
        <TaskButton $active><Altium w={24} h={32} c="#c3a55f" /></TaskButton>
        <TaskButton $open>
          <Svg w={32} h={30}><path d="M1 19Q3 7 16 5q11 0 11 10 0 5-6 6-4 0-4 4-4 5-10 1-8-4-6-7z" fill="#d9ecf5" stroke="#a9cbdc" /><circle cx="6" cy="17" r="2.700" fill="#e2574c" /><circle cx="11" cy="12" r="2.700" fill="#62b853" /><circle cx="18" cy="9.500" r="2.700" fill="#f2b62c" /><circle cx="14" cy="19" r="2.500" fill="#4b9bcd" /><path d="m26 7-6 21q-2.500 3-2-2l5-20z" fill="#dc7c2a" /><path d="M23 7q0-4 1-7 5-1 7 2l-4 6z" fill="#b98a61" /></Svg>
        </TaskButton>
        <Tray>
          <Slot $w={21}><Svg w={8} h={4}><path d="M0 4h8L4 0z" fill="#fff" /></Svg></Slot>
          <Slot $w={24}><Svg w={16} h={14}><path d="M4.500 2.500H15v8H5M7 13.500h7M10.500 11v2" fill="none" stroke="#fff" /><path d="M.5.500h4v3.500h-4zM2.500 4v9" fill="none" stroke="#fff" /></Svg></Slot>
          <Slot $w={27}><Svg w={17} h={14}><path d="M.5 4.500h3l4-3.500v12l-4-3.500h-3zM10 5q1.500 2 0 4M12 3q3 4 0 8M14 1q4.500 6 0 12" fill="none" stroke="#fff" /></Svg></Slot>
          <Label $w={34} $size={12} $ls={-0.1}>РУС</Label>
          <Clock>19:34<br />11.12.2021</Clock>
          <Svg w={26} h={26}><path d="M1 2h16v12H8l-4 4v-4H1z" fill="#fff" /><path d="M4 5.500h10M4 8.500h10M4 11.500h7" stroke="#164b98" /><circle cx="16.500" cy="18" r="8" fill="#27415f" stroke="#7f91a9" /><text x="13.200" y="22.200" fontFamily="Noto Sans" fontSize="11.500" fontWeight="600" fill="#fff">4</text></Svg>
        </Tray>
      </TaskBar>
    </Screen>
  );
}
